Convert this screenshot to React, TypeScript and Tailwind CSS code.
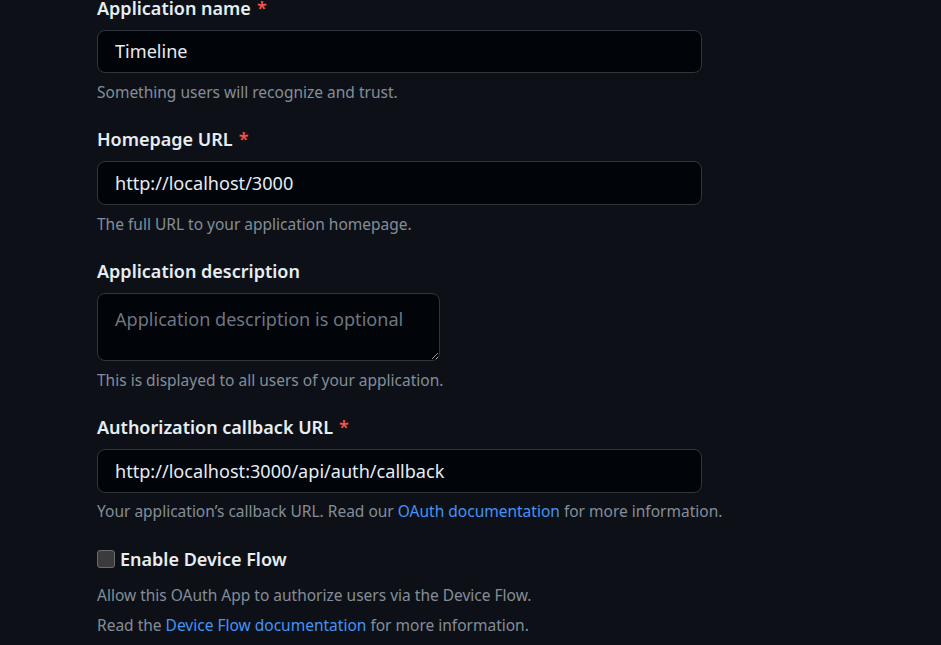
import React from "react";

const font = { fontFamily: '"Noto Sans", "Open Sans", sans-serif' };

interface FieldProps {
  label: string;
  required?: boolean;
  children: React.ReactNode;
  help: React.ReactNode;
}

const Field: React.FC<FieldProps> = ({ label, required, children, help }) => (
  <div className="mb-[26.5px]">
    <label className="block h-[22px] text-[18px] leading-[22px] font-semibold text-[#e6edf3]">
      {label}
      {required && <span className="ml-[6px] text-[#f85149]">*</span>}
    </label>
    <div className="mt-[11px]">{children}</div>
    <p className="mt-[8.5px] h-[20px] text-[15.5px] leading-[20px] text-[#848d97]">
      {help}
    </p>
  </div>
);

const inputCls =
  "block h-[43.75px] w-[605px] rounded-[8px] border border-[#30363d] bg-[#010409] px-[17px] text-[18.1px] text-[#e6edf3] outline-none";

export default function App() {
  return (
    <div
      className="min-h-[645px] w-full overflow-hidden bg-[#0d1117] pl-[97px]"
      style={font}
    >
      <form className="-mt-[3.5px]">
        <Field
          label="Application name"
          required
          help="Something users will recognize and trust."
        >
          <input className={inputCls} defaultValue="Timeline" />
        </Field>

        <Field
          label="Homepage URL"
          required
          help="The full URL to your application homepage."
        >
          <input className={inputCls} defaultValue="http://localhost/3000" />
        </Field>

        <Field
          label="Application description"
          help="This is displayed to all users of your application."
        >
          <textarea
            className="block h-[68px] w-[343px] rounded-[8px] border border-[#30363d] bg-[#010409] px-[17px] py-[13px] text-[18.1px] leading-[24px] text-[#e6edf3] outline-none placeholder:text-[#6e7681] [color-scheme:dark]"
            placeholder="Application description is optional"
          />
        </Field>

        <Field
          label="Authorization callback URL"
          required
          help={
            <>
              Your application’s callback URL. Read our{" "}
              <a className="text-[#4493f8]" href="#">
                OAuth documentation
              </a>{" "}
              for more information.
            </>
          }
        >
          <input
            className={inputCls}
            defaultValue="http://localhost:3000/api/auth/callback"
          />
        </Field>

        {/* Device flow */}
        <div>
          <label className="flex h-[22px] items-center gap-[5px] text-[18px] leading-[22px] font-semibold text-[#e6edf3]">
            <input
              type="checkbox"
              className="h-[18px] w-[18px] appearance-none rounded-[3px] border border-[#6b6b6b] bg-[#3b3b3b]"
            />
            Enable Device Flow
          </label>
          <p className="mt-[10.5px] text-[15.5px] leading-[30px] text-[#848d97]">
            Allow this OAuth App to authorize users via the Device Flow.
            <br />
            Read the{" "}
            <a className="text-[#4493f8]" href="#">
              Device Flow documentation
            </a>{" "}
            for more information.
          </p>
        </div>
      </form>
    </div>
  );
}
